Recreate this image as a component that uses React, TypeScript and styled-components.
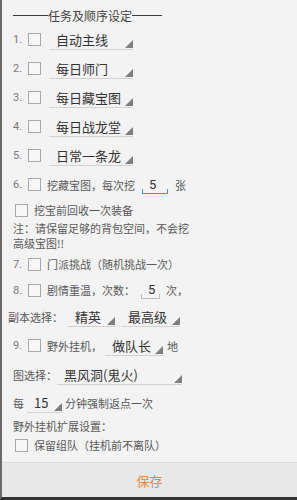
import React from "react";
import styled, { createGlobalStyle } from "styled-components";

const GlobalStyle = createGlobalStyle`
  html, body {
    margin: 0;
    padding: 0;
    background: #2e2e2e;
  }
  * {
    box-sizing: border-box;
  }
`;

const Dialog = styled.div`
  width: 297px;
  height: 500px;
  display: flex;
  flex-direction: column;
  background: #f3f3f3;
  border-left: 2px solid #6a6a6a;
  border-bottom: 3px solid #333;
  font-family: "Noto Sans CJK SC", "Noto Sans", sans-serif;
  color: #555;
  font-size: 11px;
`;

const Content = styled.div`
  flex: 1;
  display: flex;
  flex-direction: column;
  padding-left: 11px;
`;

const Title = styled.div`
  height: 25px;
  padding-top: 5px;
  display: flex;
  align-items: center;
  color: #444;
  font-size: 12px;
`;

const TitleLine = styled.span<{ $w: number }>`
  width: ${(p) => p.$w}px;
  height: 0;
  border-top: 1.5px solid #3c3c3c;
`;

const Row = styled.div<{ $h: number }>`
  height: ${(p) => p.$h}px;
  display: flex;
  align-items: center;
  white-space: nowrap;
`;

const Num = styled.span`
  width: 15px;
  color: #7a7a7a;
  font-family: "Roboto", sans-serif;
  font-size: 11px;
`;

const Box = styled.span<{ $ml?: number }>`
  width: 13px;
  height: 13px;
  margin-left: ${(p) => p.$ml ?? 0}px;
  margin-right: 6px;
  border: 1px solid #a8a8a8;
  background: #f7f7f7;
  flex-shrink: 0;
`;

const Label = styled.span<{ $ml?: number }>`
  margin-left: ${(p) => p.$ml ?? 0}px;
  color: #5a5a5a;
`;

const Spinner = styled.span<{ $w: number; $ml?: number }>`
  width: ${(p) => p.$w}px;
  height: 20px;
  margin-left: ${(p) => p.$ml ?? 0}px;
  display: inline-flex;
  align-items: center;
  padding-left: 7px;
  border-bottom: 1px solid #d2d2d2;
  color: #333;
  font-size: 13px;
  flex-shrink: 0;
`;

const SpinText = styled.span`
  flex: 1;
`;

const Corner = styled.span`
  align-self: flex-end;
  margin-bottom: 1px;
  width: 0;
  height: 0;
  border-left: 8px solid transparent;
  border-bottom: 8px solid #7e7e7e;
`;

const Field = styled.span<{ $w: number; $ml?: number; $accent?: boolean }>`
  width: ${(p) => p.$w}px;
  height: 18px;
  margin-left: ${(p) => p.$ml ?? 0}px;
  margin-right: 6px;
  padding-left: 7px;
  display: inline-flex;
  align-items: center;
  color: #333;
  font-family: "Roboto", sans-serif;
  font-size: 13px;
  border-bottom: ${(p) => (p.$accent ? "1.5px" : "1px")} solid
    ${(p) => (p.$accent ? "#3a9dc2" : "#bdbdbd")};
  position: relative;
  &::before,
  &::after {
    content: "";
    position: absolute;
    bottom: 0;
    width: 0;
    height: 4px;
    border-left: ${(p) => (p.$accent ? "1.5px" : "1px")} solid
      ${(p) => (p.$accent ? "#3a9dc2" : "#bdbdbd")};
  }
  &::before {
    left: 0;
  }
  &::after {
    right: 0;
  }
`;

const Note = styled.div`
  line-height: 15px;
  color: #5a5a5a;
`;

const Spacer = styled.div`
  flex: 1;
`;

const ButtonBar = styled.div`
  height: 35px;
  display: flex;
  align-items: center;
  justify-content: center;
  background: #e8e8e8;
  border-top: 1px solid #dedede;
  color: #f0853a;
  font-size: 13px;
`;

const Drop: React.FC<{ w: number; ml?: number; text: string }> = ({ w, ml, text }) => (
  <Spinner $w={w} $ml={ml}>
    <SpinText>{text}</SpinText>
    <Corner />
  </Spinner>
);

const TaskRow: React.FC<{ n: number; text: string }> = ({ n, text }) => (
  <Row $h={29}>
    <Num>{n}.</Num>
    <Box />
    <Drop w={84} ml={2} text={text} />
  </Row>
);

const App: React.FC = () => {
  return (
    <>
      <GlobalStyle />
      <Dialog lang="zh-CN">
        <Content>
          <Title>
            <TitleLine $w={35} />
            任务及顺序设定
            <TitleLine $w={30} />
          </Title>
          <TaskRow n={1} text="自动主线" />
          <TaskRow n={2} text="每日师门" />
          <TaskRow n={3} text="每日藏宝图" />
          <TaskRow n={4} text="每日战龙堂" />
          <TaskRow n={5} text="日常一条龙" />
          <Row $h={29}>
            <Num>6.</Num>
            <Box />
            <Label>挖藏宝图，每次挖</Label>
            <Field $w={26} $ml={7} $accent>5</Field>
            <Label $ml={1}>张</Label>
          </Row>
          <Row $h={22}>
            <Box $ml={2} />
            <Label>挖宝前回收一次装备</Label>
          </Row>
          <Note>
            注：请保留足够的背包空间，不会挖
            <br />
            高级宝图!!
          </Note>
          <Row $h={26}>
            <Num>7.</Num>
            <Box />
            <Label>门派挑战（随机挑战一次）</Label>
          </Row>
          <Row $h={26}>
            <Num>8.</Num>
            <Box />
            <Label>剧情重温，次数：</Label>
            <Field $w={19} $ml={6}>5</Field>
            <Label>次，</Label>
          </Row>
          <Row $h={28}>
            <Label $ml={-5}>副本选择：</Label>
            <Drop w={47} ml={5} text="精英" />
            <Drop w={59} ml={6} text="最高级" />
          </Row>
          <Row $h={29}>
            <Num>9.</Num>
            <Box />
            <Label>野外挂机，</Label>
            <Drop w={58} ml={3} text="做队长" />
            <Label $ml={4}>地</Label>
          </Row>
          <Row $h={29}>
            <Label>图选择：</Label>
            <Drop w={125} ml={0} text="黑风洞(鬼火)" />
          </Row>
          <Row $h={28}>
            <Label>每</Label>
            <Drop w={35} ml={3} text="15" />
            <Label $ml={3}>分钟强制返点一次</Label>
          </Row>
          <Row $h={18}>
            <Label>野外挂机扩展设置：</Label>
          </Row>
          <Row $h={20}>
            <Box $ml={2} />
            <Label>保留组队（挂机前不离队）</Label>
          </Row>
          <Spacer />
        </Content>
        <ButtonBar>保存</ButtonBar>
      </Dialog>
    </>
  );
};

export default App;
